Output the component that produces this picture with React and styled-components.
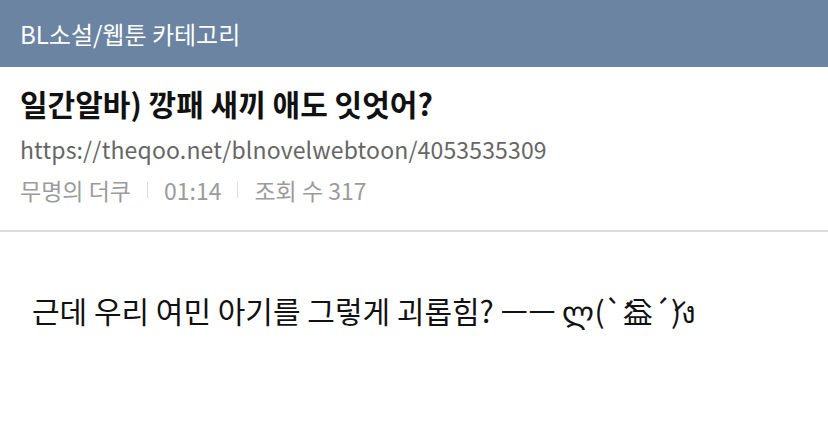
import React from 'react'
import styled, { createGlobalStyle } from 'styled-components'

const GlobalStyle = createGlobalStyle`
  body {
    margin: 0;
    background: #fff;
    font-family: "Noto Sans CJK KR", "Noto Sans", sans-serif;
  }
`

const Header = styled.header`
  display: flex;
  align-items: center;
  height: 67px;
  padding: 0 20px;
  background-color: #6b84a2;
  color: #fff;
  font-size: 24px;
`

const TitleSection = styled.section`
  padding: 16px 20px 25px;
  border-bottom: 2px solid #dcdcdc;
`

const Title = styled.h1`
  margin: 0;
  font-size: 30px;
  font-weight: 700;
  line-height: 40px;
  color: #111;
`

const Url = styled.div`
  margin-top: 10px;
  font-size: 23px;
  letter-spacing: 0.15px;
  line-height: 32px;
  color: #666;
`

const Meta = styled.div`
  display: flex;
  align-items: center;
  margin-top: 10px;
  font-size: 23px;
  line-height: 30px;
  color: #9b9b9b;
`

const Divider = styled.span`
  width: 1px;
  height: 16px;
  margin: 0 16px;
  background: #dedede;
`

const Body = styled.article`
  padding: 58px 32px;
  font-size: 30px;
  line-height: 40px;
  color: #111;
`

export default function App() {
  return (
    <>
      <GlobalStyle />
      <Header>BL소설/웹툰 카테고리</Header>
      <TitleSection>
        <Title>일간알바) 깡패 새끼 애도 잇엇어?</Title>
        <Url>https://theqoo.net/blnovelwebtoon/4053535309</Url>
        <Meta>
          <span>무명의 더쿠</span>
          <Divider />
          <span>01:14</span>
          <Divider />
          <span>조회 수 317</span>
        </Meta>
      </TitleSection>
      <Body>근데 우리 여민 아기를 그렇게 괴롭힘? ㅡㅡ ლ(`̀益´́)ง</Body>
    </>
  )
}
